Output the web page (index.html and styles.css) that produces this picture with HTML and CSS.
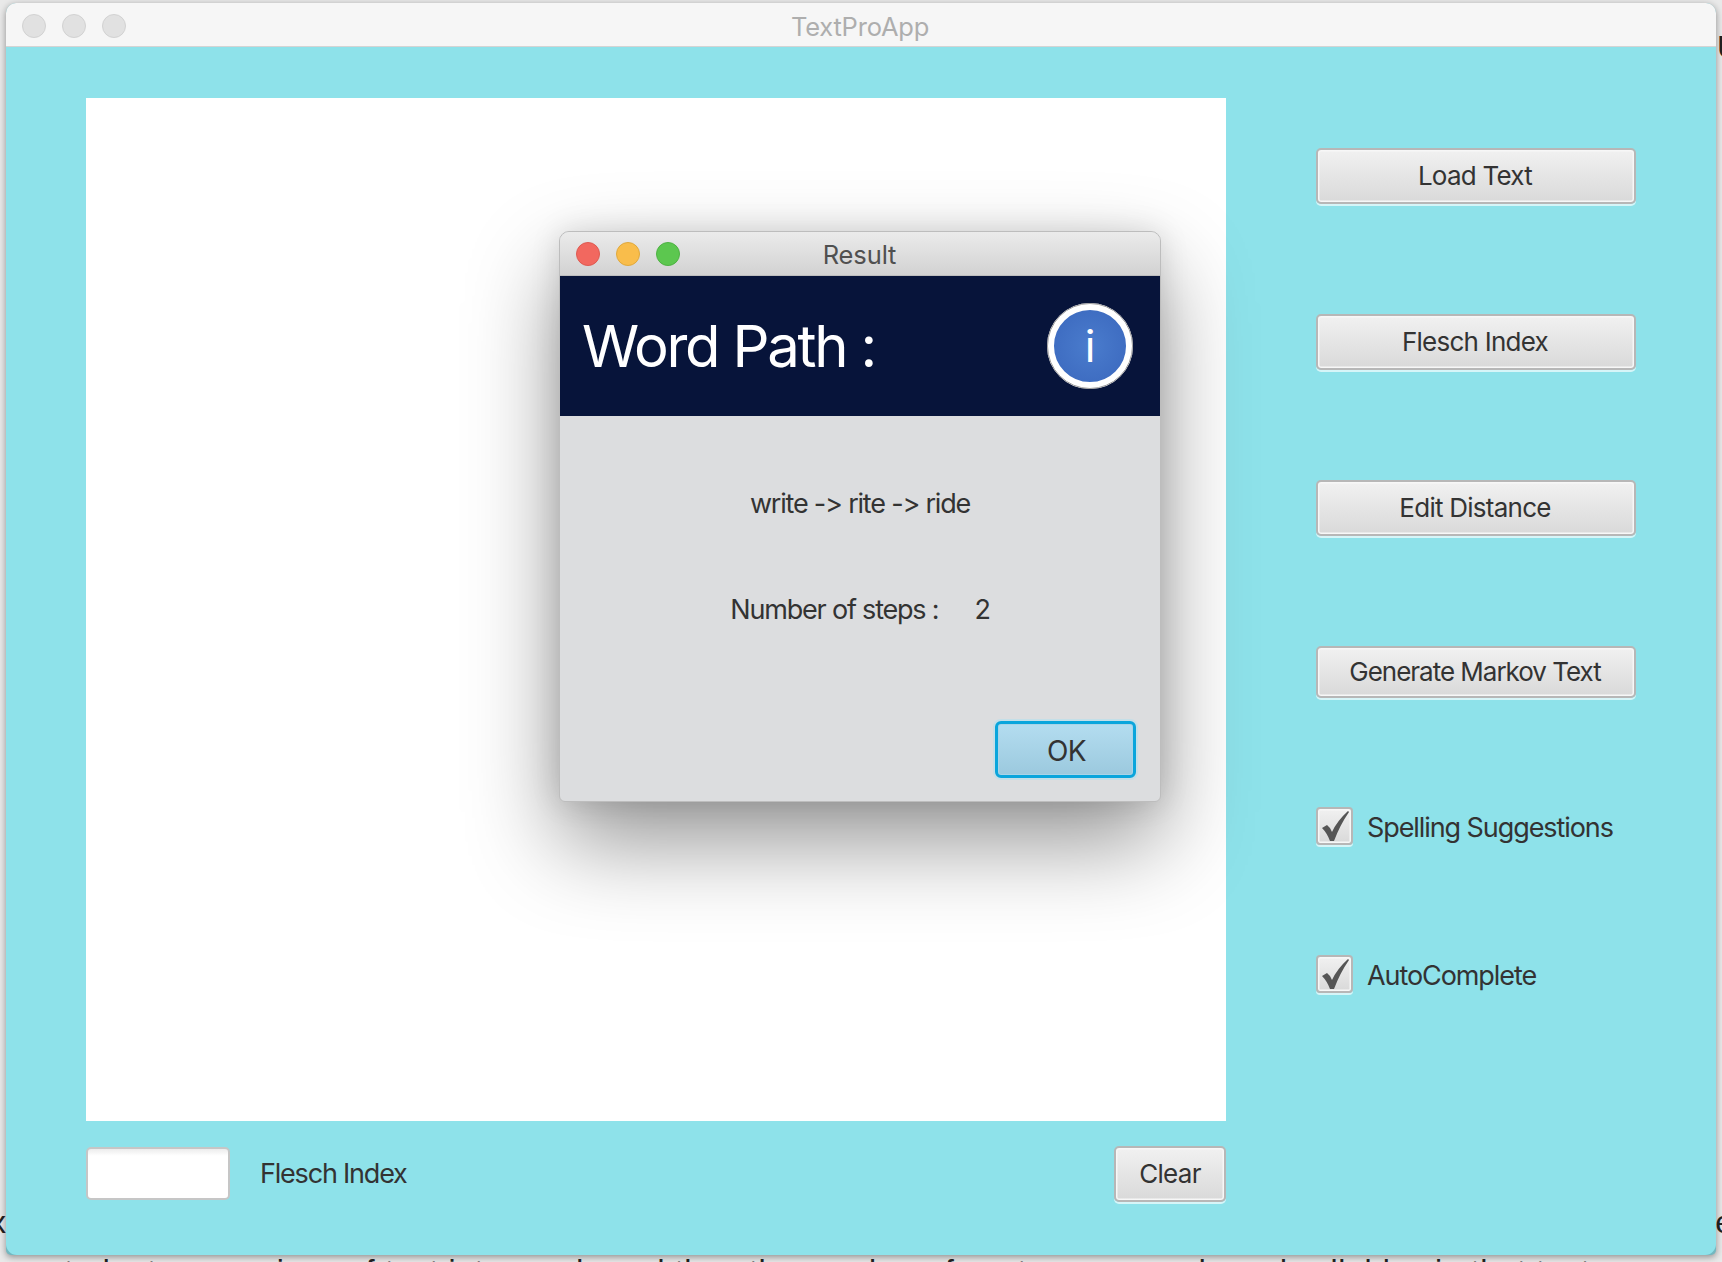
FILE: index.html
```html
<!doctype html>
<html lang="en">
<head>
    <meta charset="utf-8">
    <title>TextProApp</title>
    <link rel="stylesheet" href="styles.css">
</head>
<body>
    <div class="backdrop">
        <p class="behind-top">U</p>
        <p class="behind-mid"><span>x</span><span>e</span></p>
        <p class="behind-low">.student comparison of text into words and then the number of sentences, words and syllables in that text.</p>
    </div>

    <main class="window">
        <header class="titlebar">
            <div class="lights">
                <span class="light"></span>
                <span class="light"></span>
                <span class="light"></span>
            </div>
            <h1 class="titlebar-name">TextProApp</h1>
        </header>

        <div class="content">
            <section class="editor">
                <div class="paper"></div>
                <div class="editor-foot">
                    <input class="score" type="text">
                    <label class="score-label">Flesch Index</label>
                    <button class="btn btn-clear">Clear</button>
                </div>
            </section>

            <aside class="tools">
                <button class="btn btn-tool">Load Text</button>
                <button class="btn btn-tool">Flesch Index</button>
                <button class="btn btn-tool">Edit Distance</button>
                <button class="btn btn-tool btn-short">Generate Markov Text</button>
                <div class="check check-first">
                    <span class="check-box">
                        <svg viewBox="0 0 36 38" width="36" height="38"><path d="M6 21 L11 18 Q14 20 16 25 Q21 14 32 4 L33 5 Q24 18 18 34 L14 34 Q11 26 6 21 Z" fill="#555"/></svg>
                    </span>
                    <span class="check-label">Spelling Suggestions</span>
                </div>
                <div class="check">
                    <span class="check-box">
                        <svg viewBox="0 0 36 38" width="36" height="38"><path d="M6 21 L11 18 Q14 20 16 25 Q21 14 32 4 L33 5 Q24 18 18 34 L14 34 Q11 26 6 21 Z" fill="#555"/></svg>
                    </span>
                    <span class="check-label">AutoComplete</span>
                </div>
            </aside>
        </div>

        <div class="dialog">
            <header class="dialog-bar">
                <div class="lights lights-small">
                    <span class="light light-red"></span>
                    <span class="light light-yellow"></span>
                    <span class="light light-green"></span>
                </div>
                <h2 class="dialog-name">Result</h2>
            </header>
            <div class="dialog-head">
                <span class="dialog-heading">Word Path :</span>
                <span class="info-icon">i</span>
            </div>
            <div class="dialog-body">
                <p class="path">write -&gt; rite -&gt; ride</p>
                <p class="steps"><span>Number of steps :</span><span>2</span></p>
                <div class="dialog-actions">
                    <button class="btn btn-ok">OK</button>
                </div>
            </div>
        </div>
    </main>
</body>
</html>
```

FILE: styles.css
```css
/* reset stuff */
html {
    box-sizing: border-box;
}

*, *:before, *:after {
    box-sizing: inherit;
}

body, h1, h2, p {
    margin: 0;
    padding: 0;
    font-weight: normal;
}

:root {
    --teal: #8ee2ea;
    --text: #333;
    --ui-font: Inter, "Liberation Sans", sans-serif;
}

body {
    position: relative;
    width: 1722px;
    height: 1262px;
    overflow: hidden;
    padding: 3px 6px;
    background: #e9e9e9;
    font-family: var(--ui-font);
    color: var(--text);
}

/* page text peeking out round the window */
.backdrop {
    position: absolute;
    inset: 0;
    font-family: "Liberation Sans", sans-serif;
    font-size: 32px;
    color: #222;
}

.backdrop p {
    position: absolute;
    white-space: nowrap;
}

.behind-top {
    top: 29px;
    right: -18px;
}

.behind-mid {
    top: 1204px;
    left: 0;
    right: 0;
    display: flex;
    justify-content: space-between;
}

.behind-mid span:first-child {
    margin-left: -10px;
}

.behind-mid span:last-child {
    margin-right: -11px;
}

.behind-low {
    top: 1253px;
    left: 38px;
    letter-spacing: 0.62px;
}

.window {
    position: relative;
    display: flex;
    flex-direction: column;
    width: 1710px;
    height: 1252px;
    border-radius: 10px 10px 5px 5px;
    background: #72b8c0;
    box-shadow: 0 2px 7px rgba(0, 0, 0, .4);
}

.titlebar {
    position: relative;
    flex: none;
    display: flex;
    align-items: center;
    justify-content: center;
    height: 44px;
    padding: 3px 2px 0 0;
    border-radius: 10px 10px 0 0;
    border-bottom: 1px solid #d4d4d4;
    background: #f6f6f6;
}

.titlebar-name {
    font-size: 25.5px;
    color: #aeaeae;
    letter-spacing: -0.2px;
}

.lights {
    position: absolute;
    left: 16px;
    top: 11px;
    display: flex;
    gap: 16px;
}

.light {
    width: 24px;
    height: 24px;
    border-radius: 50%;
    border: 1px solid #d2d2d2;
    background: #e1e1e1;
}

.lights-small {
    left: 16px;
    top: 10px;
}

.light-red {
    background: #f2685f;
    border-color: #de5a51;
}

.light-yellow {
    background: #f9bd4b;
    border-color: #e0a93d;
}

.light-green {
    background: #5cc74f;
    border-color: #4eb243;
}

.content {
    flex: 1;
    display: flex;
    padding: 51px 0 0 80px;
    border-radius: 0 0 11px 11px;
    background: var(--teal);
}

.editor {
    width: 1140px;
}

.paper {
    height: 1023px;
    background: #fff;
}

.editor-foot {
    display: flex;
    align-items: center;
    margin-top: 24px;
    height: 57px;
}

.score {
    width: 144px;
    height: 53px;
    border: 2px solid #c6c6c6;
    border-radius: 5px;
    background: linear-gradient(#ececec, #fff 14%);
}

.score-label {
    flex: 1;
    margin-left: 30px;
    font-size: 27px;
    letter-spacing: -1.2px;
}

.btn {
    border: 2px solid #b7b7b7;
    border-radius: 5px;
    background: linear-gradient(#f1f1f1, #d9d9d9);
    box-shadow: inset 0 0 0 1.5px #f7f7f7, 0 2px 0 #d6f5f8;
    font-family: var(--ui-font);
    font-size: 26px;
    letter-spacing: -0.75px;
    color: var(--text);
    padding: 0 2px 2px 0;
}

.btn-clear {
    width: 112px;
    height: 56px;
    padding: 0;
}

.tools {
    display: flex;
    flex-direction: column;
    margin-left: 90px;
    padding-top: 50px;
    width: 320px;
}

.btn-tool {
    flex: none;
    height: 56px;
    margin-bottom: 110px;
}

.btn-short {
    height: 52px;
    margin-bottom: 0;
    letter-spacing: -1.02px;
}

.check {
    display: flex;
    align-items: center;
    gap: 14px;
    height: 38px;
    margin-bottom: 110px;
    font-size: 27px;
    letter-spacing: -1.08px;
}

.check-first {
    margin-top: 109px;
}

.check-label {
    padding-top: 2px;
}

.check-box {
    flex: none;
    width: 37px;
    height: 38px;
    border: 2px solid #b7b7b7;
    border-radius: 4px;
    background: linear-gradient(#f1f1f1, #d9d9d9);
    box-shadow: inset 0 0 0 1.5px #f7f7f7, 0 2px 0 #d6f5f8;
}

.check-box svg {
    display: block;
    margin: -2px;
}

/* the alert sits over the editor */
.dialog {
    position: absolute;
    left: 553px;
    top: 228px;
    display: flex;
    flex-direction: column;
    width: 602px;
    height: 571px;
    border: 1px solid #bdbdbd;
    border-radius: 10px 10px 6px 6px;
    background: #dcdddf;
    box-shadow: 0 40px 90px rgba(0, 0, 0, .42), 0 0 30px rgba(0, 0, 0, .12);
}

.dialog-bar {
    position: relative;
    flex: none;
    display: flex;
    align-items: center;
    justify-content: center;
    height: 44px;
    padding: 2px 1px 0 0;
    border-radius: 9px 9px 0 0;
    border-bottom: 1px solid #bebebe;
    background: linear-gradient(#ebebeb, #d2d2d2);
}

.dialog-name {
    font-size: 25.5px;
    color: #505050;
    letter-spacing: -0.1px;
}

.dialog-head {
    flex: none;
    display: flex;
    align-items: center;
    justify-content: space-between;
    height: 140px;
    padding: 0 27px 0 22px;
    background: #07143a;
}

.dialog-heading {
    font-size: 58px;
    letter-spacing: -2.25px;
    color: #fff;
}

.info-icon {
    display: flex;
    align-items: center;
    justify-content: center;
    width: 86px;
    height: 86px;
    border-radius: 50%;
    border: 7px solid #fff;
    outline: 1px solid #9c9c9c;
    outline-offset: -1px;
    background: radial-gradient(#4a7ccd, #3a67bd);
    font-size: 44px;
    color: #fff;
}

.dialog-body {
    flex: 1;
    display: flex;
    flex-direction: column;
    align-items: center;
    font-size: 27px;
    letter-spacing: -1.2px;
}

.path {
    margin-top: 71px;
    line-height: 34px;
}

.steps {
    display: flex;
    gap: 36px;
    margin-top: 72px;
    line-height: 34px;
}

.dialog-actions {
    align-self: flex-end;
    margin: 94px 24px 0 0;
}

.btn-ok {
    width: 141px;
    height: 57px;
    padding: 2px 0 0 2px;
    border: 3px solid #0aa5dc;
    border-radius: 6px;
    background: linear-gradient(#b4ddf0, #9bc9de);
    box-shadow: inset 0 0 0 1px #a8d4e8, 0 0 0 2px #c4dfe8;
    font-size: 28px;
    letter-spacing: -0.5px;
}
```
